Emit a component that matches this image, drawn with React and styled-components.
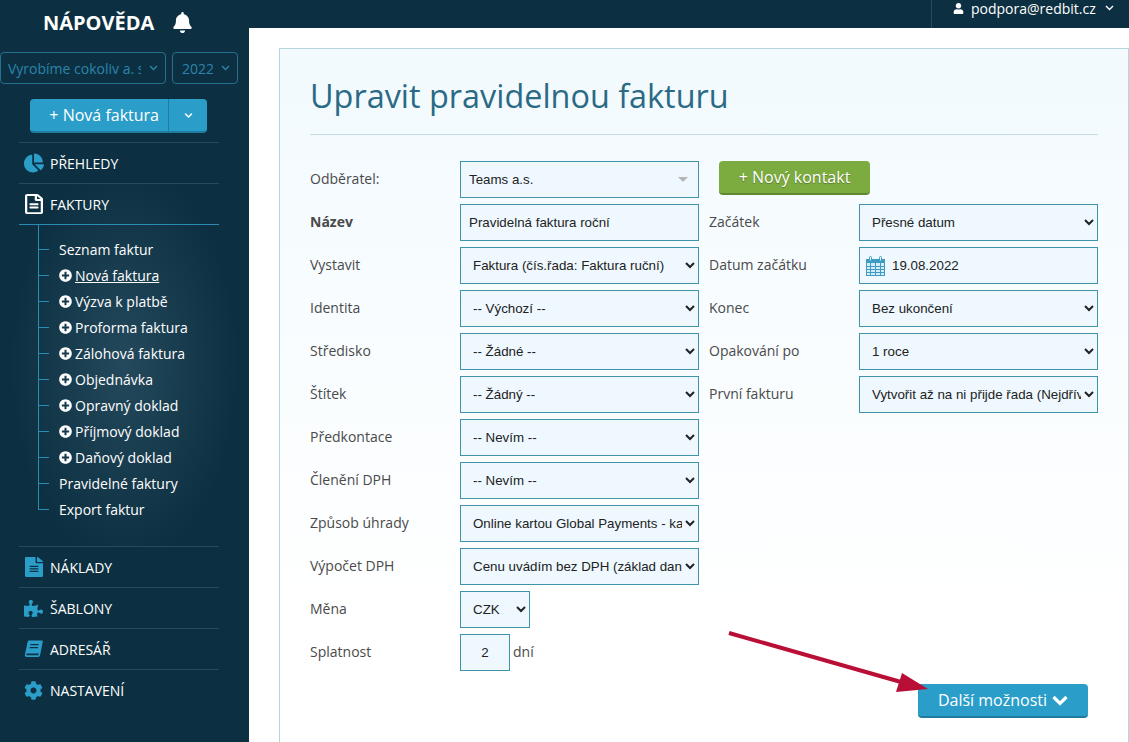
import styled, { createGlobalStyle } from "styled-components";
import {
  FaBell,
  FaChartPie,
  FaRegFileAlt,
  FaFileAlt,
  FaPuzzlePiece,
  FaCog,
  FaPlusCircle,
  FaUser,
  FaChevronDown,
} from "react-icons/fa";

const subItems = [
  { name: "Seznam faktur" },
  { name: "Nová faktura", plus: true, active: true },
  { name: "Výzva k platbě", plus: true },
  { name: "Proforma faktura", plus: true },
  { name: "Zálohová faktura", plus: true },
  { name: "Objednávka", plus: true },
  { name: "Opravný doklad", plus: true },
  { name: "Příjmový doklad", plus: true },
  { name: "Daňový doklad", plus: true },
  { name: "Pravidelné faktury" },
  { name: "Export faktur" },
];

const BookIcon = () => (
  <svg width="19" height="19" viewBox="0 0 19 19" fill="currentColor">
    <path d="M5 0.5h13c.6 0 .9.5.8 1L16 15.5c-.2.9-.8 1.4-1.700 1.400H2.500C1.300 16.900.6 16 .9 14.700L3.700 1.600C3.900 1 4.400.5 5 .5zM6.500 4l-.3 1.200h8.300l.3-1.200zM5.800 7l-.3 1.200h8.300l.3-1.200zM2.700 15.300h11.600l.5-1.700H3c-.5 0-.7.400-.7.900 0 .5.100.800.400.800z" fillRule="evenodd" />
  </svg>
);

const CalendarIcon = () => (
  <svg width="19" height="20" viewBox="0 0 19 20">
    <rect x="0.500" y="3.500" width="18" height="16" fill="#d5ecf6" stroke="#3d9cc4" />
    <rect x="0" y="3" width="19" height="4" fill="#3d9cc4" />
    <path d="M0 10.500h19M0 13.500h19M0 16.500h19M4.500 7v12M9.500 7v12M14.500 7v12" stroke="#3d9cc4" strokeWidth="1" />
    <rect x="3.500" y="0.500" width="2" height="4.500" rx="1" fill="#eef8fe" stroke="#3d9cc4" />
    <rect x="13.500" y="0.500" width="2" height="4.500" rx="1" fill="#eef8fe" stroke="#3d9cc4" />
  </svg>
);

function App() {
  return (
    <>
      <GlobalStyle />
      <Layout>
        <Sidebar>
          <Brand>
            <BrandName>NÁPOVĚDA</BrandName>
            <FaBell size={21} />
          </Brand>
          <Pickers>
            <Picker $width={166} $pad={7}>
              <PickerText>Vyrobíme cokoliv a. s</PickerText>
              <PickerArrow>
                <ThinChevron />
              </PickerArrow>
            </Picker>
            <Picker $width={66} $pad={9}>
              <PickerText>2022</PickerText>
              <PickerArrow>
                <ThinChevron />
              </PickerArrow>
            </Picker>
          </Pickers>
          <SplitButton>
            <SplitMain>+ Nová faktura</SplitMain>
            <SplitArrow>
              <FaChevronDown size={9} />
            </SplitArrow>
          </SplitButton>
          <Nav>
            <NavRow>
              <NavIcon>
                <FaChartPie size={20} />
              </NavIcon>
              PŘEHLEDY
            </NavRow>
          </Nav>
          <OpenGroup>
            <NavRow $open>
              <NavIcon $white>
                <WideOutlineFile />
              </NavIcon>
              FAKTURY
            </NavRow>
            <SubList>
              {subItems.map((item) => (
                <SubItem key={item.name}>
                  {item.plus && <FaPlusCircle size={13} />}
                  <SubLabel $active={item.active}>{item.name}</SubLabel>
                </SubItem>
              ))}
            </SubList>
          </OpenGroup>
          <Nav>
            <NavRow>
              <NavIcon>
                <WideFile />
              </NavIcon>
              NÁKLADY
            </NavRow>
            <NavRow>
              <NavIcon>
                <FaPuzzlePiece size={19} />
              </NavIcon>
              ŠABLONY
            </NavRow>
            <NavRow>
              <NavIcon>
                <BookIcon />
              </NavIcon>
              ADRESÁŘ
            </NavRow>
            <NavRow>
              <NavIcon>
                <FaCog size={19} />
              </NavIcon>
              NASTAVENÍ
            </NavRow>
          </Nav>
        </Sidebar>
        <Main>
          <TopBar>
            <UserMenu>
              <FaUser size={11} />
              <UserMail>podpora@redbit.cz</UserMail>
              <ThinChevron />
            </UserMenu>
          </TopBar>
          <Panel>
            <Title>Upravit pravidelnou fakturu</Title>
            <Divider />
            <FormGrid>
              <Label>Odběratel:</Label>
              <ComboBox>
                Teams a.s.
                <ComboCaret />
              </ComboBox>
              <ContactCell>
                <GreenButton>+ Nový kontakt</GreenButton>
              </ContactCell>

              <Label $bold>Název</Label>
              <TextField readOnly value="Pravidelná faktura roční" />
              <Label $side>Začátek</Label>
              <SelectField value="Přesné datum" />

              <Label>Vystavit</Label>
              <SelectField value="Faktura (čís.řada: Faktura ruční)" />
              <Label $side>Datum začátku</Label>
              <DateField>
                <CalendarIcon />
                19.08.2022
              </DateField>

              <Label>Identita</Label>
              <SelectField value="-- Výchozí --" />
              <Label $side>Konec</Label>
              <SelectField value="Bez ukončení" />

              <Label>Středisko</Label>
              <SelectField value="-- Žádné --" />
              <Label $side>Opakování po</Label>
              <SelectField value="1 roce" />

              <Label>Štítek</Label>
              <SelectField value="-- Žádný --" />
              <Label $side>První fakturu</Label>
              <SelectField value="Vytvořit až na ni přijde řada (Nejdříve)" />

              <Label>Předkontace</Label>
              <SelectField value="-- Nevím --" />

              <Label>Členění DPH</Label>
              <SelectField value="-- Nevím --" />

              <Label>Způsob úhrady</Label>
              <SelectField value="Online kartou Global Payments - karta" />

              <Label>Výpočet DPH</Label>
              <SelectField value="Cenu uvádím bez DPH (základ daně)" />

              <Label>Měna</Label>
              <SelectField value="CZK" $narrow />

              <Label>Splatnost</Label>
              <DueCell>
                <DueInput readOnly value="2" />
                <DueUnit>dní</DueUnit>
              </DueCell>
            </FormGrid>
            <Actions>
              <MoreButton>
                Další možnosti
                <BoldChevron />
              </MoreButton>
            </Actions>
          </Panel>
        </Main>
      </Layout>
      <Arrow width="1129" height="742" viewBox="0 0 1129 742">
        <path d="M729 633 L908 684" stroke="#b90f36" strokeWidth="4" fill="none" />
        <polygon points="902,673 928,689 896,692" fill="#b90f36" />
      </Arrow>
    </>
  );
}

// native select so the browser draws its own arrow
function SelectField({ value, $narrow }) {
  return (
    <NativeSelect $narrow={$narrow} value={value} onChange={() => {}}>
      <option>{value}</option>
    </NativeSelect>
  );
}

function ThinChevron() {
  return (
    <svg width="9" height="6" viewBox="0 0 9 6" fill="none" stroke="currentColor" strokeWidth="1.400">
      <path d="M1 1l3.500 3.500L8 1" />
    </svg>
  );
}

function BoldChevron() {
  return (
    <svg width="16" height="11" viewBox="0 0 16 11" fill="none" stroke="currentColor" strokeWidth="3.200">
      <path d="M1.500 2l6.500 6.500L14.500 2" />
    </svg>
  );
}

export default App;

const GlobalStyle = createGlobalStyle`
    html, body {
        margin: 0;
        padding: 0;
        height: 100%;
        overflow: hidden;
        background: #fff;
        font-family: "Open Sans", sans-serif;
    }
    * {
        box-sizing: border-box;
    }
`;

const Layout = styled.div`
    display: flex;
    width: 1129px;
    height: 742px;
    overflow: hidden;
`;

const Sidebar = styled.aside`
    width: 249px;
    flex-shrink: 0;
    background-color: #0c3041;
    color: #fff;
    display: flex;
    flex-direction: column;
`;

const Brand = styled.div`
    height: 44px;
    padding-left: 44px;
    display: flex;
    align-items: center;
    gap: 18px;
    color: #fff;
`;

const BrandName = styled.span`
    font-size: 20px;
    font-weight: 700;
    margin-left: -1px;
`;

const Pickers = styled.div`
    display: flex;
    gap: 6px;
    margin-top: 8px;
`;

const Picker = styled.div`
    width: ${(props) => props.$width}px;
    height: 32px;
    border: 1px solid #24708f;
    border-radius: 4px;
    padding-left: ${(props) => props.$pad}px;
    color: #2a85ad;
    font-size: 14px;
    display: flex;
    align-items: center;
    justify-content: space-between;
    overflow: hidden;
`;

const PickerText = styled.span`
    white-space: nowrap;
    overflow: hidden;
    flex: 1;
`;

const PickerArrow = styled.span`
    width: 24px;
    flex-shrink: 0;
    display: flex;
    justify-content: center;
    color: #2a85ad;
`;

const SplitButton = styled.div`
    display: flex;
    width: 177px;
    height: 34px;
    margin: 15px 0 9px 30px;
    border-radius: 4px;
    overflow: hidden;
    background: #2a9dc9;
    border-bottom: 2px solid #1f7ca1;
    color: #fff;
`;

const SplitMain = styled.div`
    width: 139px;
    font-size: 16px;
    display: flex;
    align-items: center;
    justify-content: flex-end;
    padding-right: 9px;
    border-right: 1px solid #1f7ca1;
`;

const SplitArrow = styled.div`
    flex: 1;
    display: flex;
    align-items: center;
    justify-content: center;
`;

const Nav = styled.nav`
    width: 200px;
    margin-left: 19px;
    display: flex;
    flex-direction: column;
`;

const NavRow = styled.div`
    height: ${(props) => (props.$open ? "42px" : "41px")};
    border-top: 1px solid #2a4a5a;
    border-bottom: ${(props) => (props.$open ? "1px solid #2a8cb0" : "none")};
    display: flex;
    align-items: center;
    font-size: 14px;
    color: #fff;
`;

const NavIcon = styled.span`
    width: 31px;
    display: flex;
    align-items: center;
    justify-content: center;
    padding-right: 2px;
    color: ${(props) => (props.$white ? "#fff" : "#2a9dc9")};
`;

const WideFile = styled(FaFileAlt).attrs({ preserveAspectRatio: "none" })`
    width: 18px;
    height: 20px;
`;

const WideOutlineFile = styled(FaRegFileAlt).attrs({ preserveAspectRatio: "none" })`
    width: 18px;
    height: 20px;
`;

const OpenGroup = styled.div`
    padding: 0 30px 24px 19px;
    background: radial-gradient(ellipse 115px 55% at 50% 50%, #24495c 0%, #0c3041 100%);
`;

const SubList = styled.ul`
    list-style: none;
    margin: 0;
    padding: 11px 0 0 19px;
`;

const SubItem = styled.li`
    height: 26px;
    position: relative;
    display: flex;
    align-items: center;
    gap: 3px;
    padding-left: 21px;
    font-size: 14px;
    color: #fff;
    &::before {
        content: "";
        position: absolute;
        left: 0;
        top: 0;
        bottom: 0;
        border-left: 1px solid #2a8cb0;
    }
    &:first-child::before {
        top: -11px;
    }
    &:last-child::before {
        bottom: 50%;
    }
    &::after {
        content: "";
        position: absolute;
        left: 0;
        top: 50%;
        width: 11px;
        border-top: 1px solid #2a8cb0;
    }
`;

const SubLabel = styled.span`
    text-decoration: ${(props) => (props.$active ? "underline" : "none")};
`;

const Main = styled.main`
    flex: 1;
    min-width: 0;
    display: flex;
    flex-direction: column;
`;

const TopBar = styled.header`
    height: 28px;
    flex-shrink: 0;
    background: #0c3041;
    display: flex;
    justify-content: flex-end;
`;

const UserMenu = styled.div`
    width: 198px;
    border-left: 1px solid #2a4a5a;
    padding: 0 0 12px 21px;
    display: flex;
    align-items: center;
    color: #fff;
    font-size: 14px;
`;

const UserMail = styled.span`
    margin: 0 9px 0 7px;
`;

const Panel = styled.section`
    margin: 20px 0 0 30px;
    width: 850px;
    height: 740px;
    flex-shrink: 0;
    border: 1px solid #b4d4e0;
    padding: 0 30px;
    background: linear-gradient(180deg, #f2fafe 0%, #ffffff 78%);
`;

const Title = styled.h1`
    margin: 0;
    height: 85px;
    display: flex;
    align-items: center;
    padding-top: 7px;
    font-size: 32.4px;
    font-weight: 400;
    color: #2a6a85;
`;

const Divider = styled.hr`
    margin: 0 0 26px;
    border: 0;
    border-top: 1px solid #c2dbe3;
`;

const FormGrid = styled.div`
    display: grid;
    grid-template-columns: 150px 239px 160px 239px;
    grid-auto-rows: 37px;
    row-gap: 6px;
`;

const Label = styled.label`
    grid-column: ${(props) => (props.$side ? "3" : "1")};
    display: flex;
    align-items: center;
    padding-left: ${(props) => (props.$side ? "10px" : "0")};
    padding-bottom: 2px;
    font-size: 14px;
    font-weight: ${(props) => (props.$bold ? 700 : 400)};
    color: #4a4a4a;
`;

const fieldStyle = `
    width: 100%;
    height: 37px;
    border: 1px solid #3f94aa;
    background-color: #eef8fe;
    font-family: "Liberation Sans", Arial, sans-serif;
    font-size: 13.33px;
    color: #222;
    border-radius: 0;
    outline: none;
`;

const ComboBox = styled.div`
    ${fieldStyle}
    padding: 0 8px 1px;
    display: flex;
    align-items: center;
    justify-content: space-between;
`;

const ComboCaret = styled.span`
    width: 0;
    height: 0;
    margin-right: 2px;
    border-left: 5px solid transparent;
    border-right: 5px solid transparent;
    border-top: 5px solid #b5b5b5;
`;

const ContactCell = styled.div`
    grid-column: 3 / 5;
    padding-left: 20px;
`;

const GreenButton = styled.button`
    width: 151px;
    height: 34px;
    border: 0;
    border-bottom: 2px solid #5f8a33;
    border-radius: 4px;
    background: #7cab3f;
    color: #fff;
    font-family: "Open Sans", sans-serif;
    font-size: 16px;
    text-shadow: 0 1px 1px rgba(0, 0, 0, 0.3);
    padding: 0;
`;

const TextField = styled.input`
    ${fieldStyle}
    padding: 0 8px;
`;

const NativeSelect = styled.select`
    ${fieldStyle}
    padding: 0 0 0 8px;
    grid-column: ${(props) => (props.$narrow ? "2" : "auto")};
    width: ${(props) => (props.$narrow ? "70px" : "100%")};
`;

const DateField = styled.div`
    ${fieldStyle}
    padding-left: 6px;
    display: flex;
    align-items: center;
    gap: 7px;
`;

const DueCell = styled.div`
    grid-column: 2;
    display: flex;
    align-items: center;
    gap: 3px;
`;

const DueInput = styled.input`
    ${fieldStyle}
    width: 50px;
    text-align: center;
`;

const DueUnit = styled.span`
    font-size: 14px;
    color: #4a4a4a;
    padding-bottom: 2px;
`;

const Actions = styled.div`
    display: flex;
    justify-content: flex-end;
    padding-right: 10px;
    margin-top: 13px;
`;

const MoreButton = styled.button`
    width: 170px;
    height: 34px;
    border: 0;
    border-bottom: 2px solid #1f7ca1;
    border-radius: 4px;
    background: #2a9dc9;
    color: #fff;
    font-family: "Open Sans", sans-serif;
    font-size: 16px;
    display: flex;
    align-items: center;
    justify-content: center;
    gap: 5px;
    padding: 0;
`;

const Arrow = styled.svg`
    position: absolute;
    left: 0;
    top: 0;
    pointer-events: none;
`;
